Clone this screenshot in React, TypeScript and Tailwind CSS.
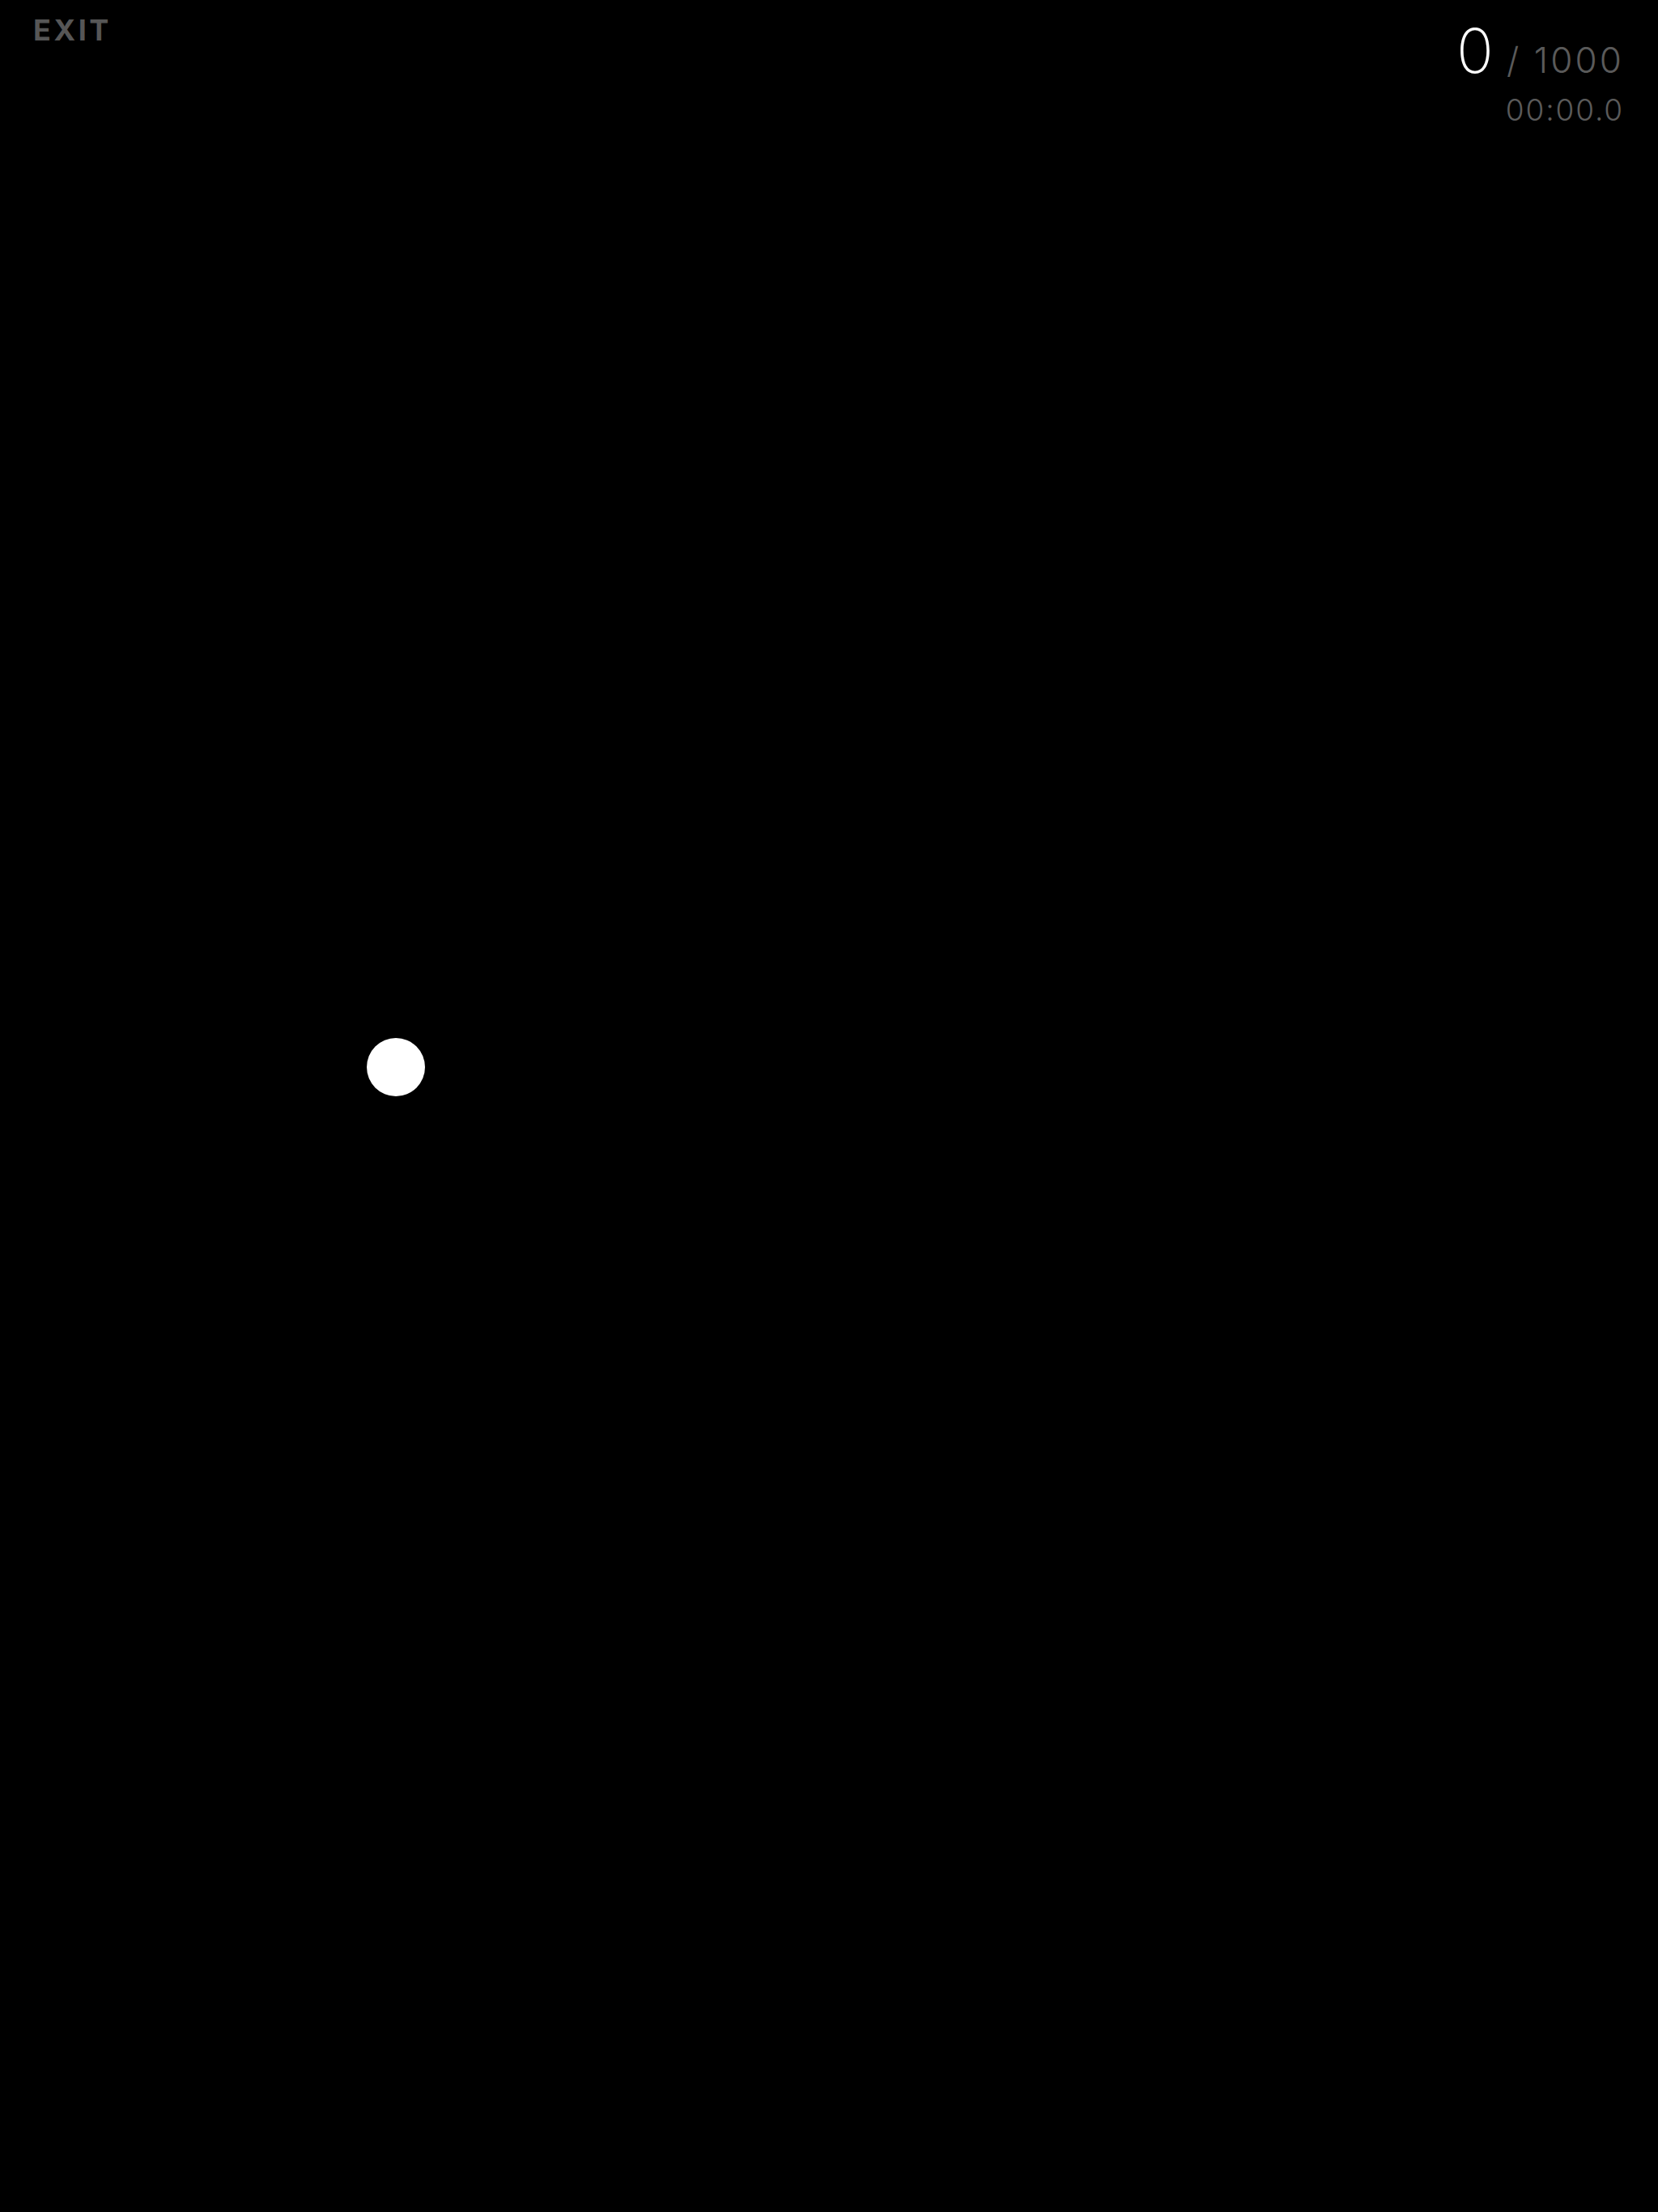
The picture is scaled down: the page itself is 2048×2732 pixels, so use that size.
export default function App() {
  return (
    <div
      className="relative w-full h-[2732px] bg-black overflow-hidden"
      style={{ fontFamily: 'Inter, "Noto Sans", sans-serif' }}
    >
      {/* Top bar */}
      <div className="flex justify-between items-start pl-[41px] pr-[42px]">
        <button className="mt-[15px] text-[36px] leading-[44px] font-bold tracking-[0.1em] text-[#565656]">
          EXIT
        </button>
        <div className="flex flex-col items-end pt-[18px]">
          <div className="flex items-baseline">
            <span className="text-[76px] leading-[88px] font-extralight text-white">0</span>
            <span className="ml-[16px] text-[44px] leading-[50px] font-light tracking-[0.07em] text-[#5a5a5a]">
              / 1000
            </span>
          </div>
          <div className="mt-[8px] text-[37px] leading-[44px] font-light tracking-[0.05em] text-[#5a5a5a]">
            00:00.0
          </div>
        </div>
      </div>

      {/* Target */}
      <div className="absolute left-[453px] top-[1282px] w-[72px] h-[72px] rounded-full bg-white" />
    </div>
  );
}
